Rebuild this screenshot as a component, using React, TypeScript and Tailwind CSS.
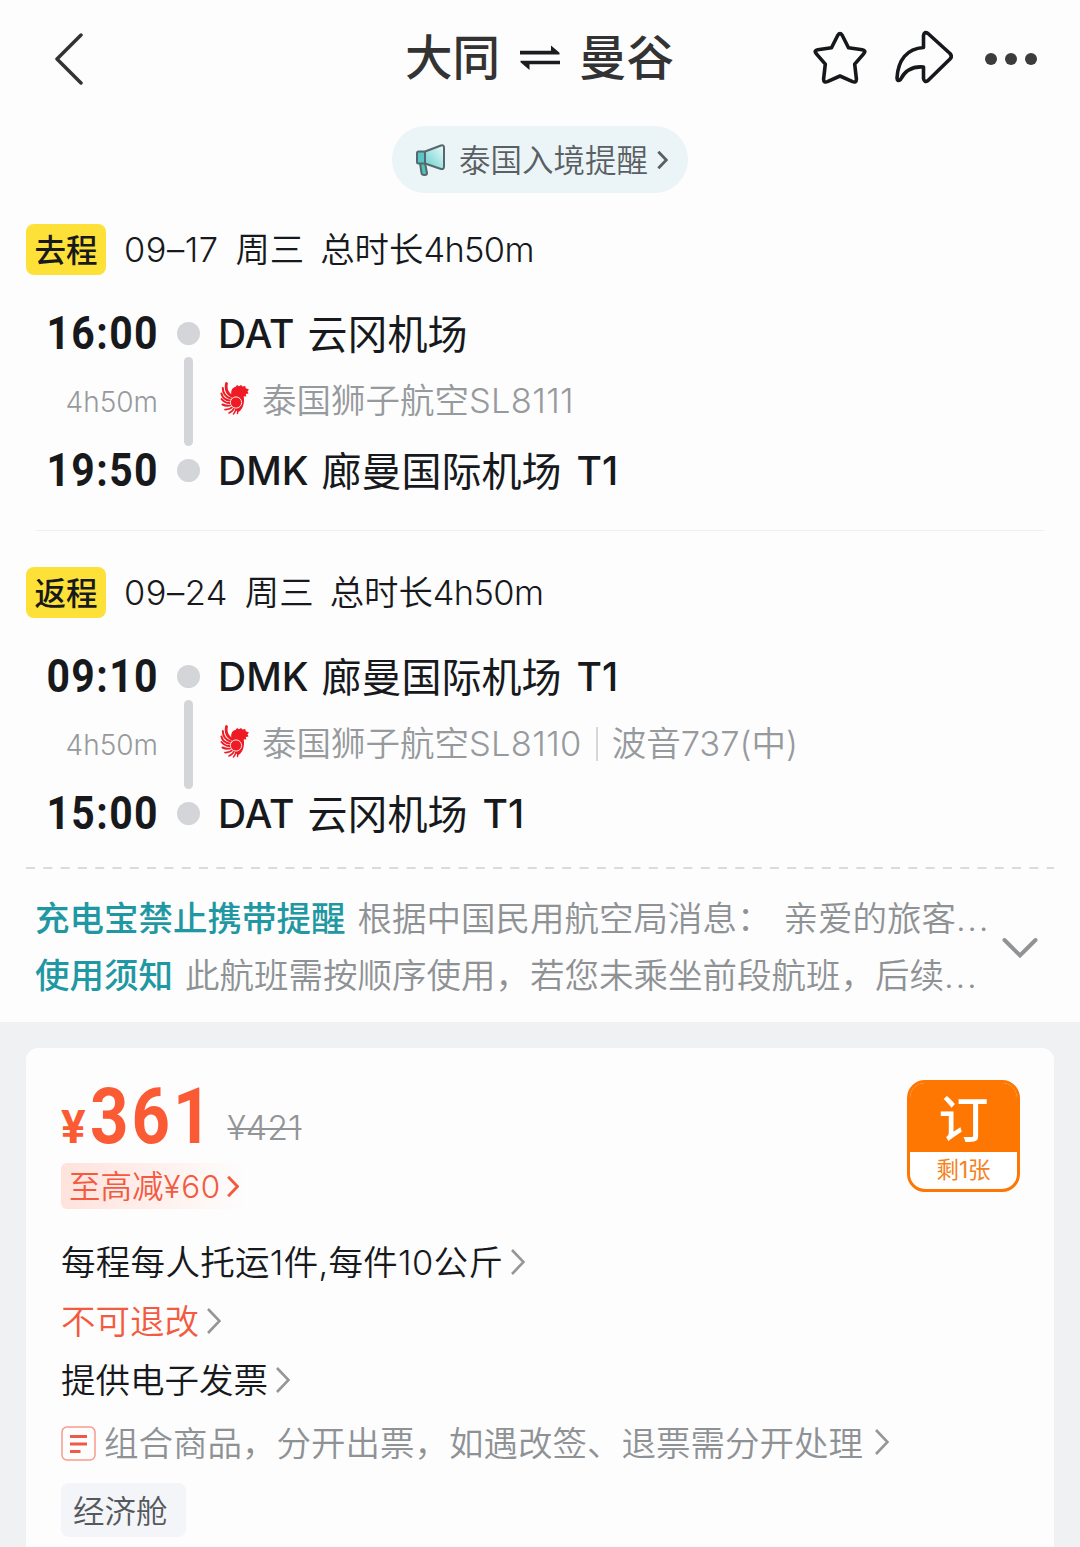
import type { ReactNode } from "react";

interface Stop {
    time: string;
    code: string;
    name: string;
    terminal?: string;
}

interface Segment {
    label: string;
    date: string;
    weekday: string;
    duration: string;
    from: Stop;
    to: Stop;
    flightNo: string;
    aircraft?: { name: string; model: string; size: string };
}

const segments: Segment[] = [
    {
        label: "去程",
        date: "09–17",
        weekday: "周三",
        duration: "4h50m",
        from: { time: "16:00", code: "DAT", name: "云冈机场" },
        to: { time: "19:50", code: "DMK", name: "廊曼国际机场", terminal: "T1" },
        flightNo: "SL8111",
    },
    {
        label: "返程",
        date: "09–24",
        weekday: "周三",
        duration: "4h50m",
        from: { time: "09:10", code: "DMK", name: "廊曼国际机场", terminal: "T1" },
        to: { time: "15:00", code: "DAT", name: "云冈机场", terminal: "T1" },
        flightNo: "SL8110",
        aircraft: { name: "波音", model: "737", size: "中" },
    },
];

function Chevron({ className }: { className: string }) {
    return (
        <svg viewBox="0 0 14 26" className={className} fill="none" stroke="currentColor">
            <path d="M1 1l11.5 12L1 25" />
        </svg>
    );
}

function LionLogo() {
    return (
        <svg viewBox="0 0 30 33" className="-mt-[5px] h-[33px] w-[30px] shrink-0">
            <path
                fill="#ee1b24"
                d="M11.5 13.5C10.5 9 12 5.5 15.5 5l1.5-2 2 1.2L21 3l1.5 1.6 2.7-.6.6 2.2 3.2 1.3-1.5 1.8 1 2.2-2.7.5.5 2.5-2.6-.2C24.5 19 24 25 20 29c-3 2.5-6-2-6-6z"
            />
            <g fill="none" stroke="#ee1b24" strokeWidth="2" strokeLinecap="round">
                <path d="M6.5 1.5c-1 5 .5 10 5 12.5" strokeWidth="2.8" />
                <path d="M2.8 6c0 5 3 9 8 10.5" />
                <path d="M1.4 11.5c1 4 4.5 6.8 9 7.3" />
                <path d="M1.5 17c2.5 3.2 5.5 4.3 9 4" />
                <path d="M2.5 22.5c3 1.6 6 1.6 9 .3" />
                <path d="M5 27.5c3 .2 6-1 8-3" strokeWidth="1.7" />
                <path d="M9 31c2.2-.7 4.3-2.7 5.5-5.5" strokeWidth="1.7" />
                <path d="M13.5 32c1.3-1.3 2.2-3.5 2.5-5.5" strokeWidth="1.5" />
                <path d="M17.5 31.5l.6-4.5" strokeWidth="1.5" />
            </g>
            <circle cx="16" cy="20.5" r="5.6" fill="#ee1b24" stroke="#fdfdfd" strokeWidth=".9" />
        </svg>
    );
}

function Header() {
    return (
        <header className="flex h-[118px] items-center">
            <div className="flex w-[405px] pl-[54px]">
                <svg viewBox="0 0 30 52" className="h-[52px] w-[30px]" fill="none" stroke="#333" strokeWidth="3.5" strokeLinecap="round" strokeLinejoin="round">
                    <path d="M27 2L3 26l24 24" />
                </svg>
            </div>
            <h1 className="flex w-[269px] items-center justify-between text-[47.5px] leading-[60px] font-medium text-[#333]">
                <span className="-mt-0.5">大同</span>
                <svg viewBox="0 0 40 26" className="-mt-0.5 h-[26px] w-10" fill="#1b1c1e">
                    <path d="M0 5.8h31V.5l8.5 7.300v1.700H0z" />
                    <path d="M40 19.300H9.500v5.800L.5 17.200v-1.500H40z" />
                </svg>
                <span className="-mt-0.5">曼谷</span>
            </h1>
            <div className="ml-[139px] flex items-center">
                <svg viewBox="0 0 54 54" className="-mt-[3px] h-[54px] w-[54px]" fill="none" stroke="#16181b" strokeWidth="3.6" strokeLinejoin="round">
                    <path d="M24.8 4.200q2.200-3.200 4.400 0l6.300 12.500 13.800 2.100q4.300.8 1.300 4L41.700 33.200l1.700 14.800q0 4-3.800 2.600L27 45l-12.600 5.600q-3.800 1.400-3.800-2.600l1.700-14.800L3.400 22.800q-3-3.200 1.300-4l13.800-2.100z" />
                </svg>
                <svg viewBox="0 0 58 54" className="-mt-1 ml-[28px] h-[54px] w-[58px]" fill="none" stroke="#16181b" strokeWidth="3.6" strokeLinejoin="round">
                    <path d="M28.5 5.500q.8-4.500 4.500-2l22 20q2.500 3 0 5.500L33 50.500q-3.700 2.500-4.500-2V37C17 36 9.500 41.500 5.500 49.500q-3.200 2.500-3.500-1.500C3 30 12 18.500 28.500 17.500z" />
                </svg>
                <div className="ml-[32px] flex gap-[8.5px]">
                    <i className="size-[11.5px] rounded-full bg-[#3c3c3c]" />
                    <i className="size-[11.5px] rounded-full bg-[#3c3c3c]" />
                    <i className="size-[11.5px] rounded-full bg-[#3c3c3c]" />
                </div>
            </div>
        </header>
    );
}

function EntryNotice() {
    return (
        <div className="mx-auto mt-2 flex h-[67px] w-[296px] items-center rounded-full bg-[#ebf4f6] pl-[23px] text-[31.5px] text-[#5a5f63]">
            <svg viewBox="0 0 32 34" className="h-[34px] w-8" stroke="#56686d" strokeWidth="2" strokeLinejoin="round">
                <defs>
                    <linearGradient id="horn" x1="0" y1="1" x2="1" y2="0">
                        <stop offset="0" stopColor="#62cfcc" />
                        <stop offset="1" stopColor="#eefafb" />
                    </linearGradient>
                </defs>
                <path d="M5 20h5l2 10q0 2-2 2H9q-2 0-2.500-2z" fill="#4fc3b8" />
                <path d="M10 8.500L26 2.500q3-.8 3 2v19q0 3-3 2.500L10 20.500z" fill="url(#horn)" />
                <rect x="2" y="8.5" width="8" height="12" rx="1.5" fill="#59c5c4" />
            </svg>
            <span className="mt-[2px] ml-3 leading-[40px] font-[350]">泰国入境提醒</span>
            <Chevron className="ml-[9px] h-[18px] w-[11px] stroke-[4]" />
        </div>
    );
}

function StopRow({ stop }: { stop: Stop }) {
    return (
        <div className="flex h-[46px] items-center">
            <span className="w-[159px] origin-right scale-x-[0.89] text-right font-[Roboto] text-[46px] leading-[46px] font-bold tracking-[1.6px]">{stop.time}</span>
            <i className="ml-[18px] size-[23px] rounded-full bg-[#d3d5d9]" />
            <span className="mt-px ml-[18px] text-[39px] leading-[46px] font-medium">{stop.code}</span>
            <span className="mt-[3px] ml-[13px] text-[40px] leading-[46px]">{stop.name}</span>
            {stop.terminal && <span className="mt-px ml-[15px] text-[39px] leading-[46px] font-medium">{stop.terminal}</span>}
        </div>
    );
}

function SegmentBlock({ segment }: { segment: Segment }) {
    return (
        <section>
            <div className="flex h-[51px] items-center pl-[26px] text-[34.4px] leading-[50px] font-[350]">
                <span className="flex h-[51px] w-20 items-center justify-center rounded-lg bg-[#fde138] pt-[2px] text-[31.5px] font-medium">{segment.label}</span>
                <span className="ml-[18px] tracking-[0.5px]">{segment.date}</span>
                <span className="ml-[17px]">{segment.weekday}</span>
                <span className="ml-[16px]">总时长</span>
                <span className="tracking-[-0.6px]">{segment.duration}</span>
            </div>
            <div className="mt-[35px]">
                <StopRow stop={segment.from} />
                <div className="flex h-[91px] items-center font-[350] text-[#979a9d]">
                    <span className="w-[158px] text-right text-[28px]">{segment.duration}</span>
                    <i className="ml-[26px] h-[89px] w-[9px] rounded-full bg-[#d3d5d9]" />
                    <div className="mb-[2px] ml-[27px] flex items-center text-[34.5px] leading-[46px]">
                        <LionLogo />
                        <span className="ml-[12px]">泰国狮子航空</span>
                        <span className="tracking-[0.3px]">{segment.flightNo}</span>
                        {segment.aircraft && (
                            <>
                                <i className="mx-[14px] h-[34px] w-[2px] bg-[#d5d7d9]" />
                                <span>{segment.aircraft.name}</span>
                                <span>{segment.aircraft.model}</span>
                                <span>({segment.aircraft.size})</span>
                            </>
                        )}
                    </div>
                </div>
                <StopRow stop={segment.to} />
            </div>
        </section>
    );
}

function Notices() {
    return (
        <div className="flex h-[154px] items-center pl-[35px] text-[34.5px] text-[#8f9295]">
            <div className="mt-[2px] w-[956px]">
                <p className="flex h-[57px] items-center whitespace-nowrap">
                    <b className="font-medium text-[#1f98a3]">充电宝禁止携带提醒</b>
                    <span className="ml-[12px] font-[350]">根据中国民用航空局消息：</span>
                    <span className="ml-[12px] font-[350]">亲爱的旅客</span>
                    <span className="font-[350] tracking-[1.6px]">...</span>
                </p>
                <p className="flex h-[57px] items-center whitespace-nowrap">
                    <b className="font-medium text-[#1f98a3]">使用须知</b>
                    <span className="ml-[12px] font-[350]">此航班需按顺序使用，若您未乘坐前段航班，后续</span>
                    <span className="font-[350] tracking-[1.8px]">...</span>
                </p>
            </div>
            <svg viewBox="0 0 36 22" className="mt-[3px] ml-[11px] h-[22px] w-9" fill="none" stroke="#919396" strokeWidth="4" strokeLinecap="round">
                <path d="M2.500 3L18 18.500 33.500 3" />
            </svg>
        </div>
    );
}

function DetailRow({ children, className }: { children: ReactNode; className: string }) {
    return (
        <div className={`flex items-center text-[34.5px] leading-[46px] font-[350] ${className}`}>
            {children}
            <Chevron className="-mt-[2px] ml-[8px] h-[26px] w-[14px] stroke-[2.6] text-[#949698]" />
        </div>
    );
}

function OfferCard() {
    return (
        <section className="mx-[26px] mt-[26px] h-[499px] rounded-t-xl bg-[#fdfdfd] pt-[31px] pr-[34px] pl-[35px]">
            <div className="flex justify-between">
                <div>
                    <div className="flex h-[84px] items-baseline text-[#fb5b34]">
                        <span className="font-[Roboto] text-[46px] leading-[76px] font-bold">¥</span>
                        <span className="-mr-[21px] ml-[4px] origin-left scale-x-[0.86] font-[Roboto] text-[78px] leading-[76px] font-bold tracking-[3.5px]">361</span>
                        <s className="-mt-[2px] ml-[14px] self-center pt-[16px] text-[34px] leading-[46px] font-[350] text-[#929497] decoration-2">¥421</s>
                    </div>
                    <div className="flex h-[46px] w-[184px] items-center rounded-md bg-linear-to-r from-[#ffe2dc] to-[#fdfdfd] pt-[2px] pl-[8px] text-[31.5px] font-[350] text-[#f35a40]">
                        <span>至高减</span>
                        <span className="tracking-[0.6px]">¥60</span>
                        <Chevron className="-mt-[2px] ml-[6px] h-[21px] w-[12px] stroke-[3.6]" />
                    </div>
                </div>
                <div className="mt-px flex h-[112px] w-[113px] flex-col overflow-hidden rounded-[18px] border-[3px] border-[#fe7702] bg-white text-center">
                    <div className="h-[69px] bg-[#fe7702] text-[50px] leading-[74px] font-medium text-white">订</div>
                    <div className="text-[22.5px] leading-[35px] text-[#f58220]">剩1张</div>
                </div>
            </div>
            <div className="mt-[24px] flex flex-col">
                <DetailRow className="h-[59px] tracking-[0.3px]">每程每人托运1件,每件10公斤</DetailRow>
                <DetailRow className="h-[59px] text-[#f35a40]">不可退改</DetailRow>
                <DetailRow className="h-[59px]">提供电子发票</DetailRow>
                <DetailRow className="h-[66px] text-[#8f9295]">
                    <svg viewBox="0 0 35 35" className="mr-[8px] size-[35px]" fill="none">
                        <rect x="1" y="1" width="33" height="33" rx="5" stroke="#f79b8b" strokeWidth="1.5" />
                        <path d="M9 10.500h17M9 18h17M9 25.500h10.500" stroke="#ee5a48" strokeWidth="3" />
                    </svg>
                    <span className="mt-px mr-[4px]">组合商品，分开出票，如遇改签、退票需分开处理</span>
                </DetailRow>
                <span className="mt-[7px] flex h-[54px] w-[125px] items-center rounded-lg bg-[#f4f5f8] pt-[3px] pl-[12px] text-[31.5px] font-[350] text-[#55585c]">经济舱</span>
            </div>
        </section>
    );
}

export default function App() {
    return (
        <main className="h-[1547px] w-[1080px] overflow-hidden bg-[#eff1f3] font-[Inter,'Noto_Sans_CJK_SC',sans-serif] text-[#17191c]">
            <div className="h-[1022px] bg-[#fdfdfd]">
                <Header />
                <EntryNotice />
                <div className="mt-[31px]">
                    <SegmentBlock segment={segments[0]} />
                </div>
                <hr className="mx-[36px] mt-[37px] mb-[36px] border-t border-[#eeeff0]" />
                <SegmentBlock segment={segments[1]} />
                <svg viewBox="0 0 1028 2" className="mt-[31px] ml-[26px] h-[2px] w-[1028px]" stroke="#d9dbdd" strokeWidth="2">
                    <path d="M0 1h1028" strokeDasharray="9 8.300" />
                </svg>
                <Notices />
            </div>
            <OfferCard />
        </main>
    );
}
